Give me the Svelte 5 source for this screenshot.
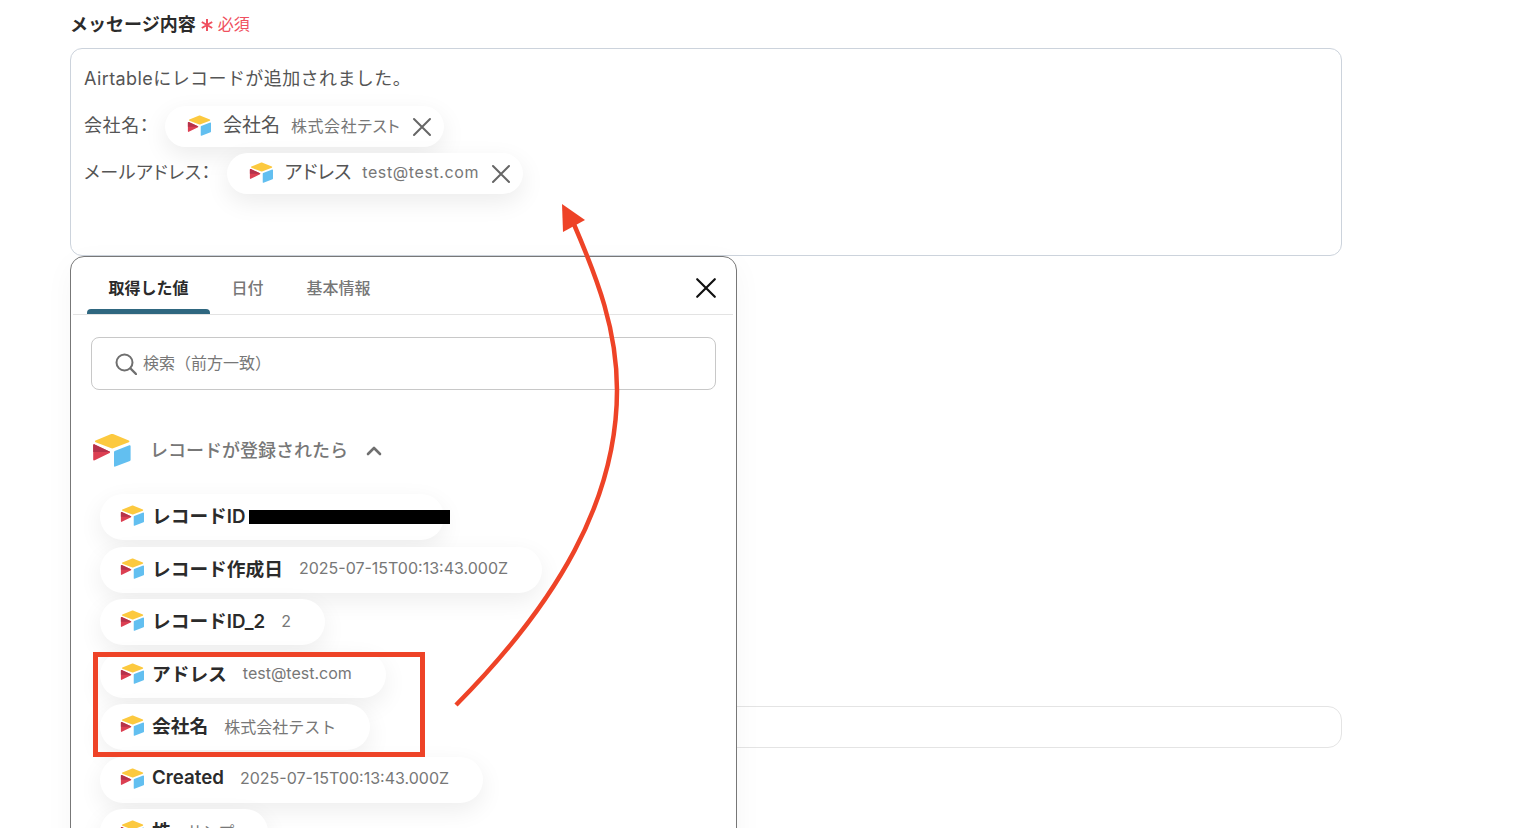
<script>
  // Values picked from the previous step, shown as pills in the popup
  const outputs = [
    { label: 'レコードID', redacted: true },
    { label: 'レコード作成日', value: '2025-07-15T00:13:43.000Z' },
    { label: 'レコードID_2', value: '2' },
    { label: 'アドレス', value: 'test@test.com' },
    { label: '会社名', value: '株式会社テスト' },
    { label: 'Created', value: '2025-07-15T00:13:43.000Z' },
    { label: '株', value: 'サンプ' }
  ];

  const chips = [
    { prefix: '会社名：', label: '会社名', value: '株式会社テスト' },
    { prefix: 'メールアドレス：', label: 'アドレス', value: 'test@test.com' }
  ];

  const tabs = ['取得した値', '日付', '基本情報'];
</script>

{#snippet logo(cls)}
  <svg class={cls} viewBox="0 0 40 34" aria-hidden="true">
    <path d="M18.6 1.3 3.6 7.4c-.8.3-.8 1.4 0 1.8l15.1 5.9c1 .4 2.1.4 3.1 0l15-5.9c.8-.4.8-1.5 0-1.8L21.7 1.3c-1-.4-2.1-.4-3.1 0z" fill="#fcc93f" />
    <path d="M22 18.9v13.8c0 .7.7 1.1 1.3.9l14.6-5.7c.4-.2.7-.5.7-1V13.1c0-.7-.7-1.1-1.3-.9l-14.6 5.7c-.4.2-.7.5-.7 1z" fill="#62bff0" />
    <path d="M1.2 12.3c0-.8.8-1.2 1.4-.9l14.9 7c.7.3.7 1.1.1 1.5L2.7 27.3c-.7.4-1.5-.1-1.5-.9z" fill="#dc3f52" />
    <path d="M1.2 12.3c0-.8.8-1.2 1.4-.9l14.9 7c.3.2.5.4.5.7L1.2 19z" fill="#b5324a" />
  </svg>
{/snippet}

{#snippet cross(cls)}
  <svg class={cls} viewBox="0 0 20 20" aria-hidden="true">
    <path d="M2 2l16 16M18 2L2 18" fill="none" stroke="currentColor" stroke-width="2" stroke-linecap="round" />
  </svg>
{/snippet}

<main class="page">
  <section class="field">
    <div class="field-label">
      <span>メッセージ内容</span>
      <span class="required">
        <svg class="asterisk" viewBox="0 0 14 14" aria-hidden="true">
          <path d="M7 1v12M1.8 4l10.4 6M12.2 4L1.8 10" fill="none" stroke="#ef5060" stroke-width="2" />
        </svg>
        必須
      </span>
    </div>

    <div class="message-box">
      <div class="text-line">Airtableにレコードが追加されました。</div>
      {#each chips as chip}
        <div class="chip-line">
          <span class="chip-prefix">{chip.prefix}</span>
          <span class="chip">
            {@render logo('logo-sm')}
            <span class="chip-label">{chip.label}</span>
            <span class="chip-value">{chip.value}</span>
            {@render cross('chip-x')}
          </span>
        </div>
      {/each}
    </div>

    <div class="popup">
      <div class="tabs">
        {#each tabs as tab, i}
          <button class="tab" class:active={i === 0}>{tab}</button>
        {/each}
        {@render cross('popup-x')}
      </div>

      <div class="search">
        <svg class="search-icon" viewBox="0 0 22 22" aria-hidden="true">
          <circle cx="9.5" cy="9.5" r="8" fill="none" stroke="#6f6f6f" stroke-width="2" />
          <path d="M15.5 15.5l5.5 5.5" fill="none" stroke="#6f6f6f" stroke-width="2.4" stroke-linecap="round" />
        </svg>
        <span class="search-text">検索（前方一致）</span>
      </div>

      <div class="section-head">
        {@render logo('logo-lg')}
        <span class="section-title">レコードが登録されたら</span>
        <svg class="chevron" viewBox="0 0 16 10" aria-hidden="true">
          <path d="M2 8l6-6 6 6" fill="none" stroke="#6f6f6f" stroke-width="2.6" stroke-linecap="round" stroke-linejoin="round" />
        </svg>
      </div>

      <div class="pills">
        {#each outputs as item}
          <div class="pill">
            {@render logo('logo-sm')}
            <span class="pill-label">{item.label}</span>
            {#if item.redacted}
              <span class="redacted"></span>
            {:else}
              <span class="pill-value">{item.value}</span>
            {/if}
          </div>
        {/each}
      </div>
    </div>
  </section>

  <div class="second-input"></div>

  <!-- annotation layered over the screenshot -->
  <div class="highlight"></div>
  <svg class="arrow" width="1516" height="828" viewBox="0 0 1516 828" aria-hidden="true">
    <path d="M456 705C558 602 617 500 617 390C617 330 598 280 573 222" fill="none" stroke="#ee4327" stroke-width="4.5" />
    <path d="M562 204L585 220L563 232z" fill="#ee4327" />
  </svg>
</main>

<style>
  :global(body) {
    margin: 0;
    background: #fff;
    overflow: hidden;
  }

  .page {
    position: relative;
    height: 828px;
    overflow: hidden;
    padding: 0 174px 0 70px;
    font-family: Inter, "Noto Sans CJK JP", sans-serif;
    color: #333;
  }

  .field {
    position: relative;
    padding-top: 11px;
  }

  .field-label {
    display: flex;
    align-items: center;
    height: 24px;
    margin-bottom: 13px;
    font-size: 18px;
    font-weight: 700;
    color: #2b2b2b;
  }

  .required {
    display: flex;
    align-items: center;
    gap: 4px;
    margin-left: 4px;
    font-size: 16px;
    font-weight: 400;
    color: #ef5060;
  }

  .asterisk {
    width: 14px;
    height: 14px;
    margin-top: 3px;
  }

  .message-box {
    box-sizing: border-box;
    height: 208px;
    padding: 17px 13px 0;
    border: 1px solid #ccd3dc;
    border-radius: 12px;
    background: #fff;
    font-size: 18px;
    color: #555;
  }

  .text-line {
    line-height: 26px;
    margin-bottom: 14px;
    letter-spacing: 0.42px;
  }

  .chip-line {
    display: flex;
    align-items: flex-start;
    margin-bottom: 6px;
  }

  .chip-prefix {
    line-height: 39px;
    font-feature-settings: "palt";
    letter-spacing: 0.6px;
    margin-right: 15.5px;
  }

  .chip {
    display: inline-flex;
    align-items: center;
    height: 41px;
    box-sizing: border-box;
    padding: 0 12px 3px 22px;
    border-radius: 21px;
    background: #fff;
    box-shadow: 0 8px 24px rgba(0, 0, 0, 0.08);
  }

  .chip-label {
    margin-left: 11px;
    margin-top: -3px;
    font-size: 19px;
    font-feature-settings: "palt";
  }

  .chip-value {
    margin-left: 11px;
    font-size: 16px;
    color: #777;
    font-feature-settings: "palt";
    letter-spacing: 0.6px;
  }

  :global(.chip-x) {
    width: 20px;
    height: 20px;
    margin-left: 12px;
    margin-top: 3px;
    color: #666;
  }

  .popup {
    position: absolute;
    left: 0;
    top: 256px;
    box-sizing: border-box;
    width: 667px;
    height: 640px;
    border: 1px solid #777;
    border-radius: 14px;
    background: #fff;
    box-shadow: 0 8px 30px rgba(0, 0, 0, 0.04);
  }

  .tabs {
    display: flex;
    align-items: stretch;
    height: 57px;
    margin: 0 3px 0 2px;
    padding: 0 17px 0 14px;
    border-bottom: 1px solid #e3e3e3;
  }

  .tab {
    position: relative;
    padding: 2px 21.5px 0;
    border: none;
    background: none;
    font: inherit;
    font-size: 16px;
    font-weight: 500;
    color: #777;
  }

  .tab.active {
    font-weight: 700;
    color: #2b2b2b;
  }

  .tab.active::after {
    content: '';
    position: absolute;
    left: 0;
    right: 0;
    bottom: 0;
    height: 5px;
    border-radius: 4px 4px 0 0;
    background: #2f6780;
  }

  :global(.popup-x) {
    align-self: center;
    width: 22px;
    height: 22px;
    margin-left: auto;
    margin-top: 5px;
    margin-right: -1px;
    color: #111;
  }

  .search {
    display: flex;
    align-items: center;
    gap: 6px;
    height: 53px;
    box-sizing: border-box;
    margin: 22px 20px 0;
    padding-left: 23px;
    border: 1px solid #c8c8c8;
    border-radius: 8px;
    font-size: 16px;
    color: #777;
  }

  .search-icon {
    width: 22px;
    height: 22px;
  }

  .search-text {
    margin-top: -4px;
  }

  .section-head {
    display: flex;
    align-items: center;
    margin: 43px 0 27px 21px;
  }

  :global(.logo-lg) {
    width: 40px;
    height: 34px;
  }

  :global(.logo-sm) {
    width: 25px;
    height: 21px;
    flex: none;
  }

  .section-title {
    margin-left: 18px;
    margin-top: -2px;
    font-size: 18px;
    font-weight: 500;
    color: #777;
  }

  .chevron {
    width: 16px;
    height: 10px;
    margin-left: 18px;
    margin-top: 2px;
  }

  .pills {
    display: flex;
    flex-direction: column;
    align-items: flex-start;
    gap: 6.5px;
    padding-left: 29px;
  }

  .pill {
    display: flex;
    align-items: center;
    box-sizing: border-box;
    height: 46px;
    padding: 0 34px 3px 20px;
    border-radius: 23px;
    background: #fff;
    box-shadow: 0 8px 24px rgba(0, 0, 0, 0.07);
  }

  .pill-label {
    margin-left: 7px;
    margin-top: -2px;
    font-size: 18.72px;
    font-weight: 600;
    color: #2b2b2b;
  }

  .pill-value {
    margin-left: 16px;
    font-size: 16px;
    color: #777;
  }

  .redacted {
    width: 201px;
    height: 14px;
    margin: 3px -40px 0 3px;
    background: #000;
  }

  .second-input {
    box-sizing: border-box;
    height: 42px;
    margin-top: 450px;
    border: 1px solid #e4e4e4;
    border-radius: 14px;
  }

  .highlight {
    position: absolute;
    left: 93px;
    top: 652px;
    box-sizing: border-box;
    width: 332px;
    height: 105px;
    border: 5px solid #ee4327;
  }

  .arrow {
    position: absolute;
    left: 0;
    top: 0;
    pointer-events: none;
  }
</style>
